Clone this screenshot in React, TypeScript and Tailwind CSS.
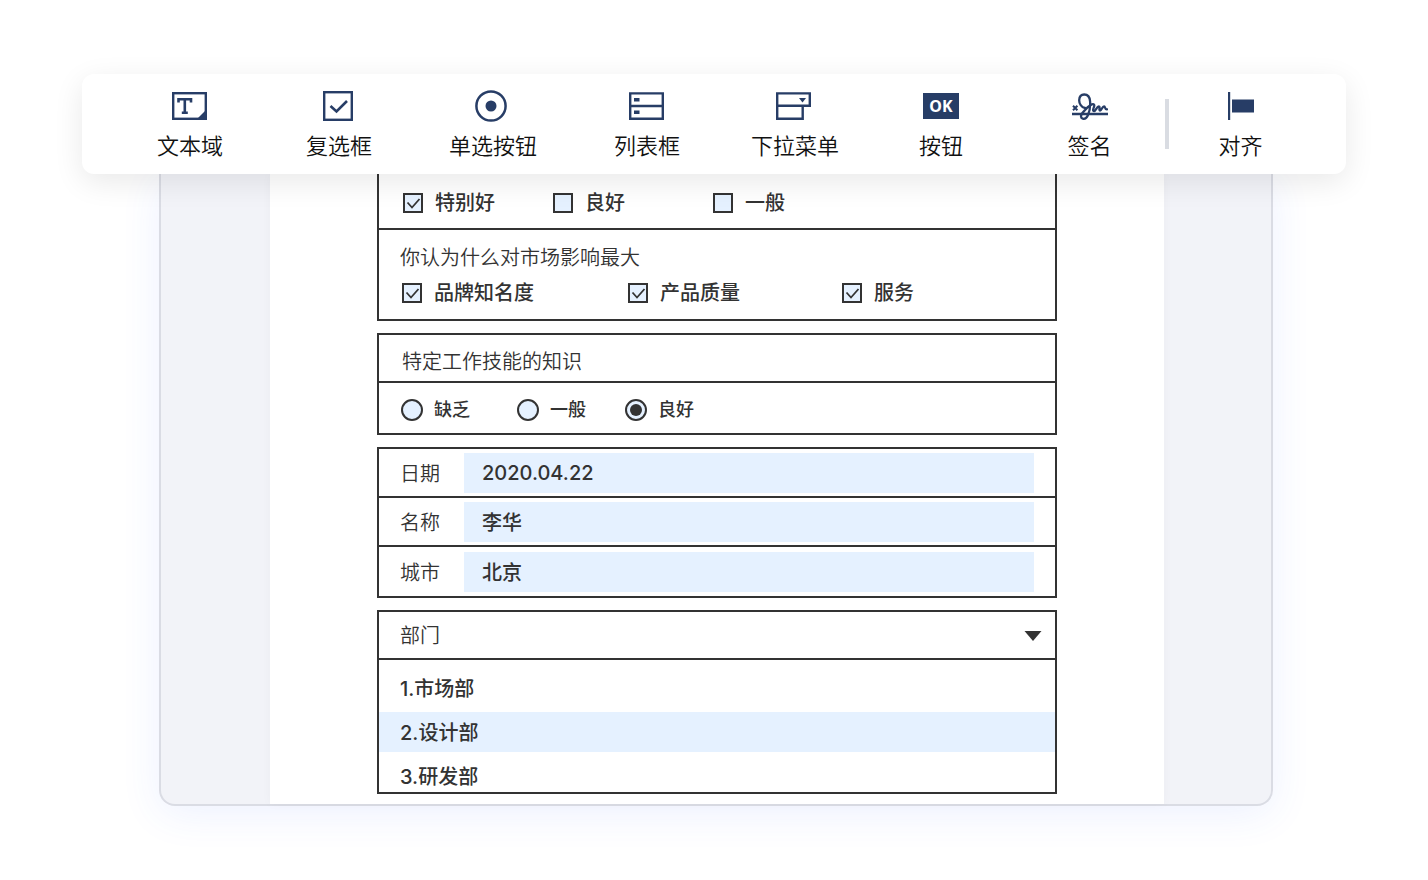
import { useState, type ReactNode } from 'react';

const tools: { label: string; icon: ReactNode }[] = [
  {
    label: '文本域',
    icon: (
      <svg width="36" height="32" viewBox="0 0 36 32" aria-hidden="true">
        <rect x="1.2" y="3.2" width="32.6" height="25.6" fill="none" stroke="currentColor" strokeWidth="2.4" />
        <path d="M35 19v11H24z" fill="currentColor" />
        <path d="M6.500 12.500V9.200h12.500v3.300M12.800 9.200v13.600M9.800 22.800h6" fill="none" stroke="currentColor" strokeWidth="2.600" />
      </svg>
    ),
  },
  {
    label: '复选框',
    icon: (
      <svg width="36" height="32" viewBox="0 0 36 32" aria-hidden="true">
        <rect x="3.200" y="2.200" width="27.600" height="27.600" fill="none" stroke="currentColor" strokeWidth="2.400" />
        <path d="M9.500 16l6 5.500L26 11" fill="none" stroke="currentColor" strokeWidth="2.600" />
      </svg>
    ),
  },
  {
    label: '单选按钮',
    icon: (
      <svg width="36" height="32" viewBox="0 0 36 32" aria-hidden="true">
        <circle cx="16" cy="16" r="14.600" fill="none" stroke="currentColor" strokeWidth="2.500" />
        <circle cx="16" cy="16" r="5.500" fill="currentColor" />
      </svg>
    ),
  },
  {
    label: '列表框',
    icon: (
      <svg width="36" height="32" viewBox="0 0 36 32" aria-hidden="true">
        <path d="M1.200 3.400h32.600v25.300H1.200zM1.200 16h32.600" fill="none" stroke="currentColor" strokeWidth="2.400" />
        <path d="M5 8h5.500v3.500H5zM5 20.500h5.500V24H5z" fill="currentColor" />
      </svg>
    ),
  },
  {
    label: '下拉菜单',
    icon: (
      <svg width="36" height="32" viewBox="1 0 36 32" aria-hidden="true" className="overflow-visible">
        <path d="M1.200 3.400h32.600v12.300H1.200zM1.200 15.700v13h25.500v-13" fill="none" stroke="currentColor" strokeWidth="2.400" />
        <path d="M23 8h7l-3.500 4.500z" fill="currentColor" />
      </svg>
    ),
  },
  {
    label: '按钮',
    icon: (
      <span className="flex h-[26px] w-9 items-center justify-center bg-[#273d66] font-['Noto_Sans'] text-base leading-none font-bold text-white">
        OK
      </span>
    ),
  },
  {
    label: '签名',
    icon: (
      <svg width="36" height="32" viewBox="0 0 36 32" aria-hidden="true" fill="none" stroke="currentColor" strokeWidth="2.300">
        <path d="M0 24h36" />
        <path d="M1 15.800l4.400 4.400M5.400 15.800L1 20.200" strokeWidth="2" />
        <path
          d="M13 18C9.500 17.500 7 13.500 7.200 10c.2-3.500 2.300-5.500 5-5.500 3.300 0 5.600 2.700 5.900 7 .3 5-.6 10.500-2.300 14-1.200 2.500-3.300 3.700-5 3.200-2.200-.7-2.300-3.200-.6-5.400 2.600-3.300 6.500-7.800 9.800-9 2-.6 2.700.8 2 2.600-.6 1.600-1.600 4 .1 4.100 1.800.1 2.600-4.600 4.700-4.600 1.700 0-.3 4 1.300 4.100 1.500.1 2.200-4.300 4-4.200 1.400.1.200 3.200 3 3"
          strokeLinecap="round"
          strokeLinejoin="round"
        />
      </svg>
    ),
  },
];

const alignTool = {
  label: '对齐',
  icon: (
    <svg width="36" height="32" viewBox="1 0 36 32" aria-hidden="true" fill="currentColor">
      <path d="M6 2h2.200v28H6zM10 9.500h22v13H10z" />
    </svg>
  ),
};

function ToolButton({ label, icon }: { label: string; icon: ReactNode }) {
  return (
    <button type="button" className="flex flex-col items-center gap-2 text-[#273d66]">
      <span className="flex h-8 items-center">{icon}</span>
      <span className="text-[22px] leading-8 font-[350] text-[#111]">{label}</span>
    </button>
  );
}

function Check({ label, checked }: { label: string; checked?: boolean }) {
  return (
    <label className="flex items-center gap-3 text-xl leading-7 font-medium">
      <span className="grid size-5 shrink-0">
        <input
          type="checkbox"
          defaultChecked={checked}
          className="peer col-start-1 row-start-1 size-5 appearance-none border-2 border-[#333] bg-[#e5f1ff]"
        />
        <svg viewBox="0 0 20 20" className="pointer-events-none col-start-1 row-start-1 hidden size-5 peer-checked:block" fill="none" stroke="#333" strokeWidth="1.800" aria-hidden="true">
          <path d="M4.500 9.500l4.500 5L16.500 6" />
        </svg>
      </span>
      {label}
    </label>
  );
}

function Radio({ label, checked }: { label: string; checked?: boolean }) {
  return (
    <label className="flex items-center gap-[11px] text-lg leading-7 font-medium">
      <span className="grid size-[22px] shrink-0 place-items-center">
        <input
          type="radio"
          name="skill"
          defaultChecked={checked}
          className="peer col-start-1 row-start-1 size-[22px] appearance-none rounded-full border-2 border-[#333] bg-[#e5f1ff]"
        />
        <span className="pointer-events-none col-start-1 row-start-1 hidden size-3 rounded-full bg-[#333] peer-checked:block" />
      </span>
      {label}
    </label>
  );
}

function Field({ id, label, value }: { id: string; label: string; value: string }) {
  return (
    <div className="flex h-[49px] items-center pr-[21px] pl-[21px]">
      <label htmlFor={id} className="w-16 shrink-0 pt-0.5 text-xl leading-7 font-[350]">
        {label}
      </label>
      <input
        id={id}
        type="text"
        defaultValue={value}
        className="h-10 min-w-0 flex-1 bg-[#e5f1ff] px-[18px] text-xl font-medium outline-none"
      />
    </div>
  );
}

const departments = ['1.市场部', '2.设计部', '3.研发部'];

export default function App() {
  const [selected, setSelected] = useState(1);

  return (
    <div className="min-h-screen bg-white px-[82px] pt-[74px] pb-[74px] font-['Inter','Noto_Sans_CJK_SC',sans-serif] text-[#333]">
      <header className="relative z-10 grid grid-cols-[148fr_150fr_158fr_150fr_146fr_146fr_151fr_4px_143fr] items-center rounded-xl bg-white px-[34px] pt-4 pb-3 shadow-[0_8px_30px_rgba(0,0,0,0.09)]">
        {tools.map((tool) => (
          <ToolButton key={tool.label} {...tool} />
        ))}
        <span className="mt-[9px] h-[50px] self-start bg-[#d9dce2]" />
        <ToolButton {...alignTool} />
      </header>

      <main className="mr-[73px] ml-[77px] rounded-b-2xl border-2 border-t-0 border-[#dadce4] bg-[#f2f3f8] pr-[107px] pl-[109px] shadow-[0_8px_40px_rgba(60,100,255,0.09)]">
        <form className="flex flex-col gap-3 bg-white px-[107px] pb-2.5 shadow-[0_0_10px_rgba(0,0,0,0.03)]">
          <section className="border-2 border-t-0 border-[#333]">
            <div className="grid h-14 grid-cols-[150px_160px_auto] items-center border-b-2 border-[#333] pt-1 pl-6">
              <Check label="特别好" checked />
              <Check label="良好" />
              <Check label="一般" />
            </div>
            <fieldset className="px-[21px] pt-[14px] pb-3">
              <legend className="float-left w-full text-xl leading-7 font-[350]">你认为什么对市场影响最大</legend>
              <div className="clear-both grid grid-cols-[226px_214px_auto] pt-[7px] pl-0.5">
                <Check label="品牌知名度" checked />
                <Check label="产品质量" checked />
                <Check label="服务" checked />
              </div>
            </fieldset>
          </section>

          <section className="border-2 border-[#333]">
            <h2 className="flex h-12 items-center border-b-2 border-[#333] pt-2 pl-[23px] text-xl leading-7 font-[350]">特定工作技能的知识</h2>
            <div className="grid h-[50px] grid-cols-[116px_108px_auto] items-center pt-1 pl-[22px]">
              <Radio label="缺乏" />
              <Radio label="一般" />
              <Radio label="良好" checked />
            </div>
          </section>

          <section className="divide-y-2 divide-[#333] border-2 border-[#333]">
            <Field id="date" label="日期" value="2020.04.22" />
            <Field id="name" label="名称" value="李华" />
            <Field id="city" label="城市" value="北京" />
          </section>

          <section className="border-2 border-[#333]">
            <button
              type="button"
              aria-expanded="true"
              aria-controls="departments"
              className="flex h-12 w-full items-center justify-between border-b-2 border-[#333] pt-0.5 pr-[13px] pl-[21px] text-xl leading-7 font-[350]"
            >
              部门
              <svg width="18" height="10" viewBox="0 0 18 10" aria-hidden="true">
                <path d="M.5 0h17L9 10z" fill="#333" />
              </svg>
            </button>
            <ul id="departments" role="listbox" aria-label="部门" className="flex h-[132px] flex-col gap-1 overflow-hidden pt-2">
              {departments.map((name, i) => (
                <li
                  key={name}
                  role="option"
                  aria-selected={i === selected}
                  onClick={() => setSelected(i)}
                  className="flex h-10 shrink-0 cursor-pointer items-center pt-0.5 pl-[21px] text-xl leading-7 font-medium aria-selected:bg-[#e5f1ff]"
                >
                  {name}
                </li>
              ))}
            </ul>
          </section>
        </form>
      </main>
    </div>
  );
}
